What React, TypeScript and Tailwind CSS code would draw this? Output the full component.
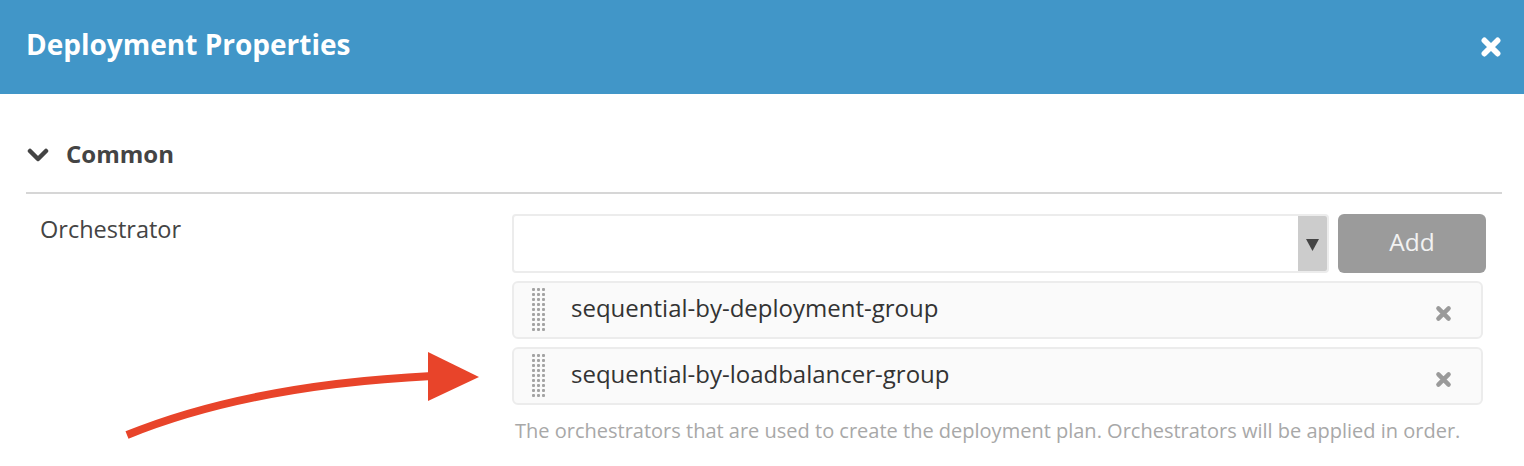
import React from "react";

const font = { fontFamily: '"Open Sans", "Noto Sans", sans-serif' };

function XIcon({ size, color }: { size: number; color: string }) {
  return (
    <svg width={size} height={size} viewBox="0 0 20 20">
      <path d="M4 4 L16 16 M16 4 L4 16" stroke={color} strokeWidth={5.2} strokeLinecap="round" />
    </svg>
  );
}

function DragHandle() {
  const dots: React.ReactNode[] = [];
  for (let r = 0; r < 9; r++) {
    for (let c = 0; c < 3; c++) {
      dots.push(<rect key={`${r}-${c}`} x={c * 5} y={r * 5} width={3} height={3} rx={1} fill="#a3a3a3" />);
    }
  }
  return (
    <svg width={14} height={44} viewBox="0 0 14 44">
      {dots}
    </svg>
  );
}

function Item({ label }: { label: string }) {
  return (
    <div className="flex items-center h-[58px] mr-[3px] rounded-[6px] border-2 border-[#ececec] bg-[#fafafa] pl-[18px] pr-[29px]">
      <DragHandle />
      <span className="ml-[25px] flex-1 text-[24px] text-[#333] leading-none pb-[4px]">{label}</span>
      <div className="mt-[6px]">
        <XIcon size={17} color="#9a9a9a" />
      </div>
    </div>
  );
}

export default function App() {
  return (
    <div className="relative w-[1524px] h-[466px] bg-white overflow-hidden" style={font}>
      <div className="h-[94px] bg-[#4196c8] flex items-center justify-between pl-[26px] pr-[22px]">
        <h1 className="text-white font-bold text-[28px] leading-none pb-[6px]">Deployment Properties</h1>
        <XIcon size={22} color="#ffffff" />
      </div>
      <div className="pl-[26px] pr-[22px]">
        <div className="flex items-center h-[100px] pt-[22px] border-b-2 border-[#d6d6d6]">
          <svg width={22} height={14} viewBox="0 0 22 14" className="ml-[1px] mt-[2px]">
            <path d="M3 3 L11 11 L19 3" fill="none" stroke="#444" strokeWidth={4.5} strokeLinecap="round" strokeLinejoin="round" />
          </svg>
          <span className="ml-[17px] text-[24px] font-bold text-[#444] leading-none">Common</span>
        </div>
        <div className="flex pt-[20px]">
          <div className="w-[486px] pl-[14px] pt-[4px] text-[23.5px] text-[#444] leading-none">Orchestrator</div>
          <div className="w-[974px] flex flex-col gap-[8px]">
            <div className="flex gap-[9px] h-[59px]">
              <div className="flex-1 flex rounded-[4px] border-2 border-[#ececec] bg-white overflow-hidden">
                <div className="flex-1" />
                <div className="w-[29px] bg-[#cccccc] flex items-center justify-center pt-[2px]">
                  <svg width={13} height={12} viewBox="0 0 13 12">
                    <path d="M0 0 L13 0 L6.5 12 Z" fill="#444" />
                  </svg>
                </div>
              </div>
              <button className="w-[148px] rounded-[6px] bg-[#9b9b9b] text-[#f2f2f2] text-[24.5px] leading-none pb-[2px]">Add</button>
            </div>
            <Item label="sequential-by-deployment-group" />
            <Item label="sequential-by-loadbalancer-group" />
            <p className="pl-[3px] pt-[8px] text-[20px] text-[#a8a8a8] leading-none whitespace-nowrap">
              The orchestrators that are used to create the deployment plan. Orchestrators will be applied in order.
            </p>
          </div>
        </div>
      </div>
      <svg className="absolute left-0 top-0 pointer-events-none" width={1524} height={466}>
        <path d="M127 435 Q 250 385 432 376" fill="none" stroke="#e8442a" strokeWidth={8} />
        <path d="M428 352 L479 377 L428 401 Z" fill="#e8442a" />
      </svg>
    </div>
  );
}
